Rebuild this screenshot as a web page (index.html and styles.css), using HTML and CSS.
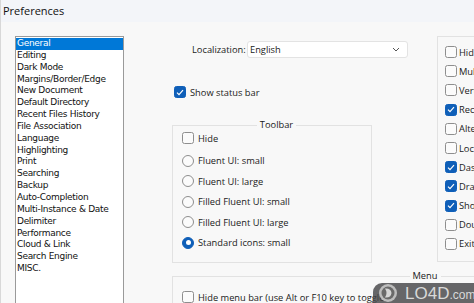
FILE: index.html
```html
<!DOCTYPE html>
<html>
<head>
<meta charset="utf-8">
<link rel="stylesheet" href="styles.css">
</head>
<body>
<div class="window">
  <div class="titlebar">Preferences</div>
  <div class="content">
    <ul class="catlist">
      <li class="sel">General</li>
      <li>Editing</li>
      <li>Dark Mode</li>
      <li>Margins/Border/Edge</li>
      <li>New Document</li>
      <li>Default Directory</li>
      <li>Recent Files History</li>
      <li>File Association</li>
      <li>Language</li>
      <li>Highlighting</li>
      <li>Print</li>
      <li>Searching</li>
      <li>Backup</li>
      <li>Auto-Completion</li>
      <li>Multi-Instance &amp; Date</li>
      <li>Delimiter</li>
      <li>Performance</li>
      <li>Cloud &amp; Link</li>
      <li>Search Engine</li>
      <li>MISC.</li>
    </ul>
    <div class="main">
      <div class="upper">
        <div class="midcol">
          <div class="locrow">
            <span class="loclabel">Localization:</span>
            <div class="select"><span>English</span><svg class="chev" width="8" height="5" viewBox="0 0 8 5"><path d="M1 1 L4 4 L7 1" fill="none" stroke="#555" stroke-width="1"/></svg></div>
          </div>
          <div class="opt statusbar"><span class="box on"><svg width="8" height="7" viewBox="0 0 8 7"><path d="M1 3.6 L3 5.6 L7 1.2" fill="none" stroke="#fff" stroke-width="1.2"/></svg></span>Show status bar</div>
          <fieldset class="group toolbar">
            <legend>Toolbar</legend>
            <div class="opt first"><span class="box"></span>Hide</div>
            <div class="opt"><span class="radio"></span>Fluent UI: small</div>
            <div class="opt"><span class="radio"></span>Fluent UI: large</div>
            <div class="opt"><span class="radio"></span>Filled Fluent UI: small</div>
            <div class="opt"><span class="radio"></span>Filled Fluent UI: large</div>
            <div class="opt"><span class="radio on"></span>Standard icons: small</div>
          </fieldset>
        </div>
        <div class="rightbox">
          <div class="ropt"><span class="box"></span>Hide title bar</div>
          <div class="ropt"><span class="box"></span>Multi-line tabs</div>
          <div class="ropt"><span class="box"></span>Vertical tabs</div>
          <div class="ropt"><span class="box on"><svg width="8" height="7" viewBox="0 0 8 7"><path d="M1 3.6 L3 5.6 L7 1.2" fill="none" stroke="#fff" stroke-width="1.2"/></svg></span>Record recent</div>
          <div class="ropt"><span class="box"></span>Alternate colors</div>
          <div class="ropt"><span class="box"></span>Lock tabs</div>
          <div class="ropt"><span class="box on"><svg width="8" height="7" viewBox="0 0 8 7"><path d="M1 3.6 L3 5.6 L7 1.2" fill="none" stroke="#fff" stroke-width="1.2"/></svg></span>Dashed line</div>
          <div class="ropt"><span class="box on"><svg width="8" height="7" viewBox="0 0 8 7"><path d="M1 3.6 L3 5.6 L7 1.2" fill="none" stroke="#fff" stroke-width="1.2"/></svg></span>Drag and drop</div>
          <div class="ropt"><span class="box on"><svg width="8" height="7" viewBox="0 0 8 7"><path d="M1 3.6 L3 5.6 L7 1.2" fill="none" stroke="#fff" stroke-width="1.2"/></svg></span>Show close button</div>
          <div class="ropt"><span class="box"></span>Double click to close</div>
          <div class="ropt"><span class="box"></span>Exit on Esc</div>
        </div>
      </div>
      <fieldset class="group menu">
        <legend>Menu</legend>
        <div class="opt"><span class="box"></span>Hide menu bar (use Alt or F10 key to toggle)</div>
      </fieldset>
    </div>
  </div>
  <div class="watermark">
    <svg class="wm-logo" width="20" height="20" viewBox="0 0 20 20">
      <circle cx="10" cy="10" r="9" fill="#bdbdbd"/>
      <circle cx="10" cy="10" r="6.5" fill="#6a6a6a"/>
      <path d="M7 5.5 Q13 5 13.5 10 Q13 15 7 14.5 Q10 10 7 5.5 Z" fill="#d6d6d6"/>
    </svg>
    <span class="wm-text">LO4D</span><span class="wm-com">.com</span>
  </div>
</div>
</body>
</html>
```

FILE: styles.css
```css
html, body {
  margin: 0;
  padding: 0;
}
body {
  width: 474px;
  height: 303px;
  overflow: hidden;
  background: #f8f8f8;
  font-family: "Open Sans", "Noto Sans", sans-serif;
  font-size: 9.3px;
  color: #1a1a1a;
}
.window {
  position: relative;
  width: 474px;
  height: 303px;
  overflow: hidden;
  border-left: 1px solid #d8d8d8;
  box-sizing: border-box;
}
.titlebar {
  height: 22px;
  box-sizing: border-box;
  padding: 5px 0 0 2px;
  font-size: 11px;
  line-height: 12px;
  background: #f3f5f9;
  color: #111;
}
.content {
  display: flex;
  align-items: flex-start;
}
.catlist {
  flex: none;
  list-style: none;
  margin: 14px 0 0 14px;
  padding: 1px 0 0 0;
  width: 109px;
  height: 300px;
  box-sizing: border-box;
  border: 1px solid #9a9a9a;
  background: #ffffff;
  font-family: "DejaVu Sans", Verdana, sans-serif;
  font-size: 9px;
  letter-spacing: -0.3px;
  line-height: 11.84px;
  color: #111;
}
.catlist li {
  padding-left: 1px;
  white-space: nowrap;
}
.catlist li.sel {
  background: #0078d7;
  color: #fff;
}
.main {
  flex: none;
  margin: 14px 0 0 48px;
  display: flex;
  flex-direction: column;
}
.upper {
  display: flex;
  align-items: flex-start;
}
.midcol {
  width: 265px;
  flex: none;
  display: flex;
  flex-direction: column;
}
.locrow {
  display: flex;
  align-items: center;
  margin-top: 5px;
  padding-left: 20px;
  height: 17px;
}
.loclabel {
  width: 55px;
  flex: none;
}
.select {
  width: 161px;
  height: 17px;
  box-sizing: border-box;
  border: 1px solid #e3e3e3;
  border-radius: 3px;
  background: #ffffff;
  display: flex;
  align-items: center;
  justify-content: space-between;
  padding: 0 7px 0 2px;
}
.chev { display: block; }
.opt {
  display: flex;
  align-items: center;
  height: 20.5px;
  white-space: nowrap;
}
.statusbar {
  margin-top: 27px;
  margin-left: 2px;
  height: 14px;
}
.box, .radio {
  flex: none;
  width: 12px;
  height: 12px;
  box-sizing: border-box;
  border: 1px solid #8e8e8e;
  background: #fbfbfb;
  margin-right: 4px;
  display: flex;
  align-items: center;
  justify-content: center;
}
.box { border-radius: 2.5px; }
.box.on {
  background: #0f5fb8;
  border-color: #0f5fb8;
}
.box svg { display: block; }
.radio { border-radius: 50%; }
.radio.on {
  background: #0f5fb8;
  border-color: #0f5fb8;
}
.radio.on::after {
  content: "";
  width: 5px;
  height: 5px;
  border-radius: 50%;
  background: #fff;
}
.group {
  margin: 0;
  border: 1px solid #e2e2e2;
  padding: 0 0 0 9px;
  box-sizing: border-box;
  min-width: 0;
}
.group legend {
  margin: 0 auto;
  padding: 0 3px;
  line-height: 12px;
  font-size: 9.3px;
}
.toolbar {
  margin-top: 20px;
  width: 200px;
  height: 144px;
  padding-top: 0;
}
.toolbar .opt.first {
  height: 14px;
  margin-bottom: 5.5px;
}
.rightbox {
  flex: none;
  width: 120px;
  height: 226px;
  box-sizing: border-box;
  border: 1px solid #e2e2e2;
  padding: 5.5px 0 0 7px;
  display: flex;
  flex-direction: column;
}
.ropt {
  display: flex;
  align-items: center;
  height: 19.2px;
  white-space: nowrap;
}
.ropt .box { margin-right: 2px; }
.menu {
  margin-top: 7px;
  width: 497px;
  height: 40px;
  padding-top: 5px;
}
.watermark {
  position: absolute;
  left: 372px;
  top: 283px;
  width: 110px;
  height: 24px;
  background: rgba(70, 70, 72, 0.82);
  border-top-left-radius: 9px;
  display: flex;
  align-items: center;
  padding-left: 5px;
  box-sizing: border-box;
  color: #d9d9d9;
  font-family: "Liberation Sans", Arial, sans-serif;
}
.wm-logo { flex: none; margin-right: 7px; margin-top: -4px; }
.wm-text {
  font-size: 17px;
  line-height: 17px;
  margin-top: -4px;
}
.wm-com {
  font-size: 12px;
  line-height: 12px;
  margin-top: -1px;
}
```
